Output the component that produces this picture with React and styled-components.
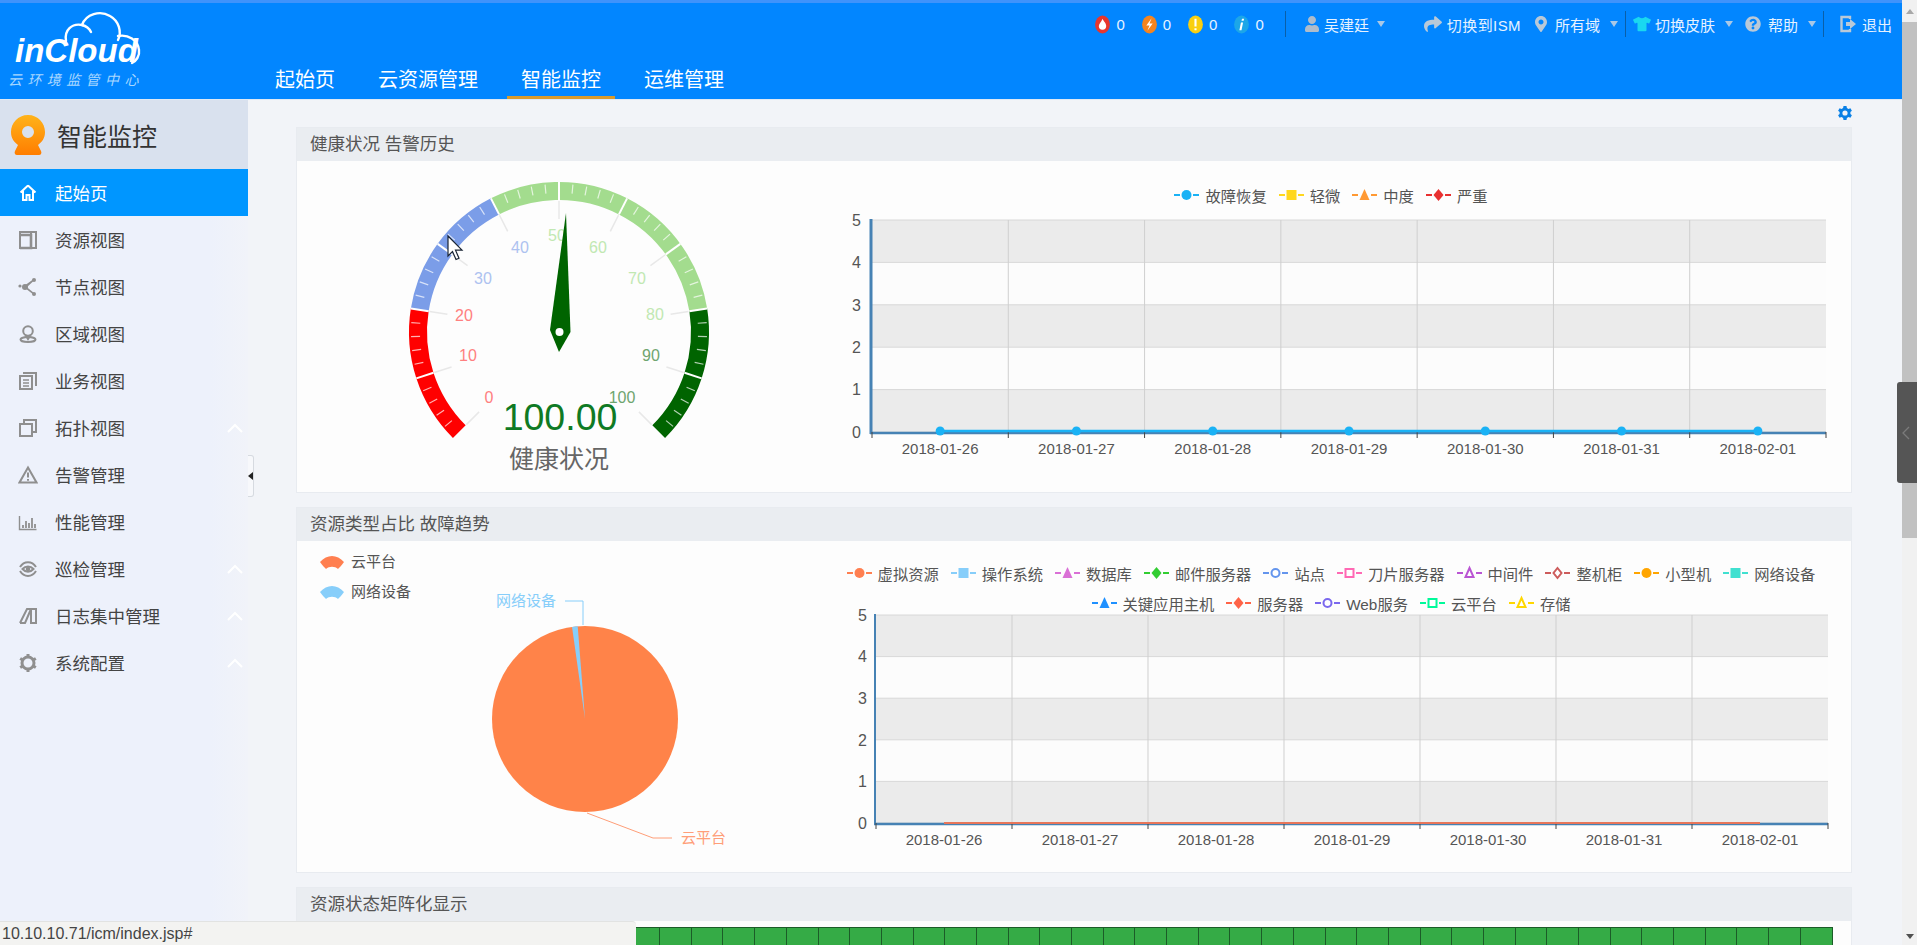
import React from "react";
import styled, { createGlobalStyle } from "styled-components";
import { FaUser, FaShare, FaMapMarkerAlt, FaTshirt, FaQuestionCircle } from "react-icons/fa";

const fontStack = `"Liberation Sans", "Noto Sans CJK SC", sans-serif`;
const blue = "#0286ff";

const GlobalStyle = createGlobalStyle`
	html, body{
		margin:0;
		height:100%;
		overflow:hidden;
		background:#f2f4f8;
		font-family:${fontStack};
	}
	*{ box-sizing:border-box; }
`;

const Page = styled.div`
	display:flex;
	height:945px;
	overflow:hidden;
	position:relative;
`;

const Shell = styled.div`
	flex:1;
	min-width:0;
	display:flex;
	flex-direction:column;
`;

const Header = styled.header`
	height:100px;
	flex:none;
	display:grid;
	grid-template-columns:261px 1fr;
	background:${blue};
	border-top:3px solid #3f93fb;
	border-bottom:1px solid #dfe9f5;
`;

const Logo = styled.div`
	position:relative;
	color:#fff;
	padding:30px 0 0 15px;
	svg{
		position:absolute;
		left:60px;
		top:5px;
	}
`;

const LogoName = styled.div`
	font-size:33px;
	line-height:36px;
	font-weight:bold;
	font-style:italic;
	letter-spacing:0;
`;

const LogoSub = styled.div`
	margin:2px 0 0 -7px;
	font-size:14px;
	line-height:18px;
	font-style:italic;
	letter-spacing:5.4px;
	color:#a9d8ff;
	white-space:nowrap;
`;

const HeaderRight = styled.div`
	display:flex;
	flex-direction:column;
	justify-content:space-between;
`;

const Toolbar = styled.div`
	height:42px;
	display:flex;
	align-items:center;
	justify-content:flex-end;
	padding-right:10px;
	font-size:15px;
	color:#e6f2ff;
`;

const Tool = styled.div`
	display:flex;
	align-items:center;
	gap:${p => p.$gap || 5}px;
	margin-left:${p => p.$ml || 0}px;
	letter-spacing:${p => p.$spacing || 0}px;
	white-space:nowrap;
	svg{ flex:none; display:block; }
`;

const Caret = styled.i`
	width:0;
	height:0;
	margin-left:${p => p.$ml || 10}px;
	border-left:4.5px solid transparent;
	border-right:4.5px solid transparent;
	border-top:6px solid #a9c8e6;
`;

const ToolDivider = styled.span`
	width:1px;
	height:26px;
	background:#0a5fa8;
	margin-left:${p => p.$ml}px;
`;

const Nav = styled.nav`
	display:flex;
	align-items:flex-end;
	gap:15px;
`;

const NavItem = styled.a`
	height:38px;
	padding:0 14px;
	font-size:20px;
	line-height:38px;
	color:#fff;
	border-bottom:3px solid ${p => (p.$active ? "#d99a2b" : "transparent")};
`;

const Body = styled.div`
	flex:1;
	min-height:0;
	display:flex;
`;

const Sidebar = styled.aside`
	width:248px;
	flex:none;
	position:relative;
	background:linear-gradient(90deg,#edf1fb 85%,#f1f3f9);
`;

const SideHead = styled.div`
	height:69px;
	display:flex;
	align-items:center;
	gap:11px;
	padding:0 0 0 10px;
	background:#d9e1ee;
	font-size:25px;
	color:#333;
`;

const SideItem = styled.a`
	height:47px;
	display:flex;
	align-items:center;
	padding:0 4px 0 18px;
	font-size:17.5px;
	color:${p => (p.$active ? "#fff" : "#444")};
	background:${p => (p.$active ? "#0096ff" : "transparent")};
	svg.icon{
		width:20px;
		height:20px;
		margin-right:17px;
		flex:none;
	}
	svg.more{
		margin-left:auto;
	}
`;

const Collapser = styled.div`
	position:absolute;
	left:100%;
	top:355px;
	width:6px;
	height:42px;
	background:#f7f8fb;
	border:1px solid #d6dae0;
	border-left:none;
	border-radius:0 3px 3px 0;
	display:flex;
	align-items:center;
	&::before{
		content:"";
		border-top:4px solid transparent;
		border-bottom:4px solid transparent;
		border-right:5px solid #222;
	}
`;

const Content = styled.main`
	flex:1;
	min-width:0;
	padding:0 50px 0 48px;
	overflow:hidden;
`;

const GearRow = styled.div`
	height:27px;
	display:flex;
	justify-content:flex-end;
	padding:5px 0 0;
	margin-right:-1px;
`;

const Panel = styled.section`
	border:1px solid #e8ebf0;
	margin-bottom:14px;
	background:#fdfdfd;
`;

const PanelTitle = styled.h3`
	margin:0;
	height:33px;
	padding-left:13px;
	font-size:17.5px;
	line-height:32px;
	font-weight:normal;
	color:#555;
	background:#eaedf1;
`;

const PanelRow = styled.div`
	display:flex;
	height:${p => p.$height}px;
	svg{ display:block; overflow:visible; }
`;

const LeftBox = styled.div`
	width:540px;
	flex:none;
`;

const ChartBox = styled.div`
	flex:1;
	min-width:0;
	padding-top:${p => p.$top}px;
`;

const LegendRow = styled.div`
	display:flex;
	justify-content:center;
	gap:12px;
	height:20px;
	margin-bottom:${p => p.$after || 0}px;
	padding-right:26px;
`;

const LegendItem = styled.div`
	display:flex;
	align-items:center;
	gap:6px;
	font-size:15.3px;
	color:#555;
	white-space:nowrap;
	svg{ flex:none; }
`;

const CellGrid = styled.div`
	display:flex;
	height:40px;
	padding:6px 0 0 14.5px;
	overflow:hidden;
`;

const Cell = styled.div`
	width:31.7px;
	height:34px;
	flex:none;
	background:#35ab46;
	border:1px solid #1c5c28;
	border-width:1px 1px 0 0;
`;

const Scrollbar = styled.div`
	width:15px;
	flex:none;
	background:#f1f1f1;
	display:flex;
	flex-direction:column;
	align-items:center;
`;

const ScrollArrow = styled.i`
	height:22px;
	flex:none;
	display:flex;
	align-items:center;
	&::before{
		content:"";
		border-left:4px solid transparent;
		border-right:4px solid transparent;
		border-bottom:5px solid #a8a8a8;
	}
`;

const ScrollThumb = styled.div`
	width:100%;
	height:516px;
	flex:none;
	background:#c1c1c1;
`;

const ScrollDown = styled.i`
	margin-top:auto;
	margin-bottom:6px;
	border-left:4px solid transparent;
	border-right:4px solid transparent;
	border-top:5px solid #505050;
`;

const DockTab = styled.div`
	position:absolute;
	right:0;
	top:382px;
	width:20px;
	height:101px;
	background:#555;
	border-radius:3px 0 0 3px;
	display:flex;
	align-items:center;
	padding-left:5px;
	color:#7b7b7b;
`;

const StatusBar = styled.div`
	position:absolute;
	left:0;
	bottom:0;
	width:636px;
	height:24px;
	padding:0 2px;
	background:#f3f3f1;
	border-top:1px solid #e2e3e2;
	border-radius:0 4px 0 0;
	font-size:16px;
	line-height:24px;
	color:#444;
`;

/* --- small drawings --- */

const CloudMark = () => (
	<svg width="84" height="58" viewBox="0 0 84 58" fill="none" stroke="#fff" strokeWidth="2.4" strokeLinecap="round">
		<path d="M6 33C4 22 12 15 22 17C26 6 40 2 50 8C59 13 62 24 58 32"/>
		<path d="M22 17C26 18 29 20 31 24"/>
		<path d="M58 28C68 26 78 32 79 42C80 48 76 53 72 55"/>
	</svg>
);

const AlertIcon = ({color, children}) => (
	<svg width="15" height="19" viewBox="0 0 14 18">
		<ellipse cx="7" cy="9" rx="7" ry="8.5" fill={color}/>
		{children}
	</svg>
);

const LogoutIcon = () => (
	<svg width="18" height="18" viewBox="0 0 18 18" fill="none">
		<path d="M11 4V2H2.5V16H11V14" stroke="#b9c9d8" strokeWidth="2.4"/>
		<path d="M7 7h4V4l6 5-6 5v-3H7z" fill="#b9c9d8"/>
	</svg>
);

const GearIcon = () => (
	<svg width="16" height="16" viewBox="0 0 16 16">
		<path fill="#0a80e6" fillRule="evenodd" d="M6.5 1h3l.4 2 1.6.9 1.9-.7 1.5 2.6-1.5 1.3v1.800l1.500 1.300-1.500 2.600-1.900-.7-1.600.9-.4 2h-3l-.4-2-1.600-.9-1.900.7-1.500-2.600 1.500-1.300V7.100L1.100 5.800l1.500-2.600 1.900.7 1.600-.9zM8 5.400a2.600 2.600 0 1 0 0 5.200 2.600 2.600 0 0 0 0-5.200z"/>
	</svg>
);

const SideLogo = () => (
	<svg width="36" height="40" viewBox="0 0 36 40">
		<defs>
			<linearGradient id="sideLogo" x1="0" y1="0" x2="0" y2="1">
				<stop offset="0" stopColor="#ffb31a"/>
				<stop offset="1" stopColor="#ff7d00"/>
			</linearGradient>
		</defs>
		<path fillRule="evenodd" fill="url(#sideLogo)" d="M18 0C28 0 35 8 35 17c0 6-3 10-7 13l3 6c1 2 0 4-2 4H7c-2 0-3-2-2-4l3-6C4 27 1 23 1 17 1 8 8 0 18 0zm0 11a6 6 0 1 0 0 12 6 6 0 0 0 0-12z"/>
	</svg>
);

const sideIcons = {
	home:<path d="M10 2.500L2.500 9.500M10 2.500l7.500 7M5 8v9h3.500v-5h3v5H15V8" />,
	panel:<g><path d="M2 2h16v16H2z"/><path d="M13 2v16" /><path d="M2 18h11V5H2" strokeWidth="2.600"/></g>,
	nodes:<g fill="#8f8f8f" stroke="none"><circle cx="7" cy="10" r="3"/><circle cx="2" cy="9" r="1.600"/><circle cx="16" cy="3" r="2"/><circle cx="16" cy="17" r="2"/><path d="M6 9l9-6.500.800 1.200L8 11zM7 11l1-1.500 8 6.500-1 1.200z"/></g>,
	region:<g><circle cx="10" cy="7" r="4.800"/><path d="M7.500 11l2.500 4 2.500-4"/><ellipse cx="10" cy="15.500" rx="7.500" ry="2.500"/></g>,
	docs:<g><path d="M2 5h12v13H2z"/><path d="M5 2h13v13"/><path d="M5 9h6M5 12h6M5 15h6" strokeWidth="1.300"/></g>,
	copy:<g><path d="M2 6h12v12H2z"/><path d="M6 6V2h12v12h-4"/></g>,
	warn:<g><path d="M10 2.500L18.500 17.500H1.500z"/><path d="M10 7.500v5M10 14v1.800" /></g>,
	bars:<g strokeWidth="1.400"><path d="M1.500 4v13.500h17"/><path d="M5 16v-3M8 16V9M11 16v-5M14 16V6M17 16v-4" strokeWidth="1.800"/></g>,
	eye:<g><path d="M2 8C6 1.500 14 1.500 18 8"/><path d="M2 12c4 6.500 12 6.500 16 0"/><path d="M4.500 10c3-3.500 8-3.500 11 0-3 3.500-8 3.500-11 0z"/><circle cx="10" cy="10" r="1.300" fill="#8f8f8f"/></g>,
	book:<g><path d="M2 17L9 3h9v14h-5V3"/><path d="M2 17h5l6-14M7 17l6-14"/></g>,
	gear:<g strokeWidth="3"><circle cx="10" cy="10" r="6"/><path d="M10 1v2.500M10 16.500V19M2.200 5.500l2.200 1.300M15.600 13.200l2.200 1.300M2.200 14.500l2.200-1.300M15.600 6.800l2.200-1.300"/></g>,
};

const SideIcon = ({name, color = "#8f8f8f"}) => (
	<svg className="icon" viewBox="0 0 20 20" fill="none" stroke={color} strokeWidth="2">
		{sideIcons[name]}
	</svg>
);

const MoreChevron = () => (
	<svg className="more" width="18" height="10" viewBox="0 0 18 10" fill="none" stroke="#fff" strokeWidth="2">
		<path d="M2 9l7-7 7 7"/>
	</svg>
);

const symbolShape = (type, cx, cy, size, color, hollow) => {
	const common = hollow
		? {fill:"#fff", stroke:color, strokeWidth:2}
		: {fill:color};
	if(type === "circle") return <circle cx={cx} cy={cy} r={size} {...common}/>;
	if(type === "rect") return <rect x={cx-size} y={cy-size} width={size*2} height={size*2} {...common}/>;
	if(type === "triangle") return <path d={`M${cx} ${cy-size-1}L${cx+size} ${cy+size}H${cx-size}Z`} {...common}/>;
	return <path d={`M${cx} ${cy-size-1}L${cx+size} ${cy}L${cx} ${cy+size+1}L${cx-size} ${cy}Z`} {...common}/>;
};

const LegendMark = ({item}) => (
	<svg width="25" height="14" viewBox="0 0 25 14">
		<path d="M0 7h6M19 7h6" stroke={item.color} strokeWidth="2"/>
		{symbolShape(item.type, 12.5, 7, item.hollow ? 4 : 5, item.color, item.hollow)}
	</svg>
);

const Legend = ({items, after}) => (
	<LegendRow $after={after}>
		{items.map(item => (
			<LegendItem key={item.name}>
				<LegendMark item={item}/>
				{item.name}
			</LegendItem>
		))}
	</LegendRow>
);

/* --- charts --- */

const dates = ["2018-01-26","2018-01-27","2018-01-28","2018-01-29","2018-01-30","2018-01-31","2018-02-01"];

const TrendChart = ({width, height, left, right, top, bottom, labelRight, axisWidth, renderData}) => {
	const rowH = (bottom-top)/5;
	const colW = (right-left)/7;
	const rows = [0,1,2,3,4];
	return (
		<svg width={width} height={height} viewBox={`0 0 ${width} ${height}`}>
			{rows.map(i => (
				<rect key={i} x={left} y={top+i*rowH} width={right-left} height={rowH} fill={i%2 ? "#fcfcfc" : "#ebebeb"}/>
			))}
			{[0,1,2,3,4,5].map(i => (
				<path key={i} d={`M${left} ${top+i*rowH}H${right}`} stroke="#d8d8d8"/>
			))}
			{[1,2,3,4,5,6].map(i => (
				<path key={i} d={`M${left+i*colW} ${top}V${bottom}`} stroke="#cfcfcf"/>
			))}
			<path d={`M${left-1} ${top-1}V${bottom+2}`} stroke="#4682b4" strokeWidth={axisWidth}/>
			<path d={`M${left-2} ${bottom+1}H${right}`} stroke="#4682b4" strokeWidth="2.600"/>
			{[0,1,2,3,4,5,6,7].map(i => (
				<path key={i} d={`M${left+i*colW} ${bottom}v6`} stroke="#444"/>
			))}
			{renderData(colW)}
			{rows.concat(5).map(i => (
				<text key={i} x={labelRight} y={top+i*rowH} dy=".36em" textAnchor="end" fontSize="16" fill="#555">{5-i}</text>
			))}
			{dates.map((d,i) => (
				<text key={d} x={left+(i+.5)*colW} y={bottom+17} dy=".36em" textAnchor="middle" fontSize="15" fill="#555">{d}</text>
			))}
		</svg>
	);
};

const gaugePoint = (cx, cy, r, value) => {
	const a = (225-2.7*value)*Math.PI/180;
	return [cx+r*Math.cos(a), cy-r*Math.sin(a)];
};

const gaugeBands = [
	{from:0, to:20, color:"#ff0000", label:"#ff8080"},
	{from:20, to:40, color:"#7b9de8", label:"#adc2f0"},
	{from:40, to:80, color:"#a3dc8e", label:"#c1e8b2"},
	{from:80, to:100, color:"#006400", label:"#6fa56f"},
];

/* label centres read off the echarts canvas, they don't sit on a clean circle */
const gaugeLabels = [
	[0,192,236],[10,171,194],[20,167,154],[30,186,117],[40,223,86],[50,260,74],
	[60,301,86],[70,340,117],[80,358,153],[90,354,194],[100,325,236],
];

const Gauge = () => {
	const cx = 262, cy = 171;
	const line = (value, r1, r2) => {
		const [x1,y1] = gaugePoint(cx,cy,r1,value);
		const [x2,y2] = gaugePoint(cx,cy,r2,value);
		return `M${x1} ${y1}L${x2} ${y2}`;
	};
	const minors = [];
	for(let v = 0; v <= 100; v += 2){
		if(v%10) minors.push(v);
	}
	const majors = [0,10,20,30,40,50,60,70,80,90,100];
	const labelColor = v => gaugeBands.find(b => v <= b.to).label;
	return (
		<svg width="540" height="332" viewBox="0 0 540 332">
			{gaugeBands.map(b => {
				const [x1,y1] = gaugePoint(cx,cy,141,b.from);
				const [x2,y2] = gaugePoint(cx,cy,141,b.to);
				return <path key={b.from} d={`M${x1} ${y1}A141 141 0 0 1 ${x2} ${y2}`} fill="none" stroke={b.color} strokeWidth="18"/>;
			})}
			{minors.map(v => <path key={v} d={line(v,148,139)} stroke="#fff" strokeOpacity=".7" strokeWidth="1.200"/>)}
			{majors.map(v => (
				<g key={v}>
					{v%100 !== 0 && <path d={line(v,150,132)} stroke="#fff" strokeWidth="2"/>}
					<path d={line(v,131,113)} stroke="#e8e8e8" strokeWidth="1.500"/>
				</g>
			))}
			{gaugeLabels.map(([v,x,y]) => (
				<text key={v} x={x} y={y} dy=".36em" textAnchor="middle" fontSize="16" fill={labelColor(v)}>{v}</text>
			))}
			<path d="M269 52L273.500 171L262 191L253 169z" fill="#006400"/>
			<circle cx="262.500" cy="171" r="4" fill="#fff"/>
			<text x="263" y="255" dy=".36em" textAnchor="middle" fontSize="37.500" fill="#0f7a24">100.00</text>
			<text x="262" y="298" dy=".36em" textAnchor="middle" fontSize="25" fill="#666">健康状况</text>
			<path d="M151 75v20l4.500-4.500 3.500 8 3-1.300-3.500-8h6.500z" fill="#fff" stroke="#1a2433" strokeWidth="1.200"/>
		</svg>
	);
};

const PieFan = ({y, color}) => (
	<path d={`M23 ${y}C30 ${y-8} 40 ${y-8} 47 ${y}C44 ${y+4} 42 ${y+6} 41 ${y+7}C38 ${y+4} 32 ${y+4} 29 ${y+7}C28 ${y+6} 26 ${y+4} 23 ${y}Z`} fill={color}/>
);

const pieColor = "#ff8349";
const sliceColor = "#87cefa";

const PieChart = () => {
	const cx = 288, cy = 178, r = 93;
	const at = deg => {
		const a = deg*Math.PI/180;
		return [cx+r*Math.sin(a), cy-r*Math.cos(a)];
	};
	const [sx1,sy1] = at(-8);
	const [sx2,sy2] = at(-4.5);
	return (
		<svg width="540" height="331" viewBox="0 0 540 331">
			<PieFan y={21} color="#ff7f50"/>
			<text x="54" y="21" dy=".36em" fontSize="15" fill="#555">云平台</text>
			<PieFan y={51} color={sliceColor}/>
			<text x="54" y="51" dy=".36em" fontSize="15" fill="#555">网络设备</text>
			<circle cx={cx} cy={cy} r={r} fill={pieColor}/>
			<path d={`M${cx} ${cy}L${sx1} ${sy1}A${r} ${r} 0 0 1 ${sx2} ${sy2}Z`} fill={sliceColor}/>
			<path d="M268 60H286V84" fill="none" stroke={sliceColor}/>
			<text x="199" y="60" dy=".36em" fontSize="15" fill={sliceColor}>网络设备</text>
			<path d="M290 272L356 297H375" fill="none" stroke="#ff9e78"/>
			<text x="384" y="297" dy=".36em" fontSize="15" fill="#ff9e78">云平台</text>
		</svg>
	);
};

/* --- data --- */

const healthLegend = [
	{name:"故障恢复", color:"#1ab2f5", type:"circle"},
	{name:"轻微", color:"#ffd71e", type:"rect"},
	{name:"中度", color:"#ff9933", type:"triangle"},
	{name:"严重", color:"#e83030", type:"diamond"},
];

const trendLegendTop = [
	{name:"虚拟资源", color:"#ff7f50", type:"circle"},
	{name:"操作系统", color:"#87cefa", type:"rect"},
	{name:"数据库", color:"#da70d6", type:"triangle"},
	{name:"邮件服务器", color:"#32cd32", type:"diamond"},
	{name:"站点", color:"#6495ed", type:"circle", hollow:true},
	{name:"刀片服务器", color:"#ff69b4", type:"rect", hollow:true},
	{name:"中间件", color:"#ba55d3", type:"triangle", hollow:true},
	{name:"整机柜", color:"#cd5c5c", type:"diamond", hollow:true},
	{name:"小型机", color:"#ffa500", type:"circle"},
	{name:"网络设备", color:"#40e0d0", type:"rect"},
];

const trendLegendBottom = [
	{name:"关键应用主机", color:"#1e90ff", type:"triangle"},
	{name:"服务器", color:"#ff6347", type:"diamond"},
	{name:"Web服务", color:"#7b68ee", type:"circle", hollow:true},
	{name:"云平台", color:"#00fa9a", type:"rect", hollow:true},
	{name:"存储", color:"#ffd700", type:"triangle", hollow:true},
];

const menu = [
	{name:"资源视图", icon:"panel"},
	{name:"节点视图", icon:"nodes"},
	{name:"区域视图", icon:"region"},
	{name:"业务视图", icon:"docs"},
	{name:"拓扑视图", icon:"copy", more:true},
	{name:"告警管理", icon:"warn"},
	{name:"性能管理", icon:"bars"},
	{name:"巡检管理", icon:"eye", more:true},
	{name:"日志集中管理", icon:"book", more:true},
	{name:"系统配置", icon:"gear", more:true},
];

const cells = Array.from({length:48}, (_,i) => i);

const App = () => {
	return (
	<Page>
		<GlobalStyle/>
		<Shell>
			<Header>
				<Logo>
					<CloudMark/>
					<LogoName>inCloud</LogoName>
					<LogoSub>云环境监管中心</LogoSub>
				</Logo>
				<HeaderRight>
					<Toolbar>
						<Tool $gap={6}>
							<AlertIcon color="#e8362d"><path d="M7 3.500c1 2.500 3.500 4 3.500 7a3.500 3.500 0 0 1-7 0C3.500 8.500 6 6.500 7 3.500z" fill="#fff"/></AlertIcon>0
						</Tool>
						<Tool $gap={6} $ml={17}>
							<AlertIcon color="#f5841f"><path d="M9 3L4 10h3l-2 5 5-7H7z" fill="#fff"/></AlertIcon>0
						</Tool>
						<Tool $gap={6} $ml={17}>
							<AlertIcon color="#f9cf10"><path d="M6 3.500h2v7.500H6zM6 12.500h2v2H6z" fill="#fff"/></AlertIcon>0
						</Tool>
						<Tool $gap={6} $ml={17}>
							<AlertIcon color="#1ca6e8"><path d="M7.500 3.500h2l-.5 2h-2zM6.500 7h2l-1.500 7.500H5z" fill="#fff"/></AlertIcon>0
						</Tool>
						<ToolDivider $ml={21.5}/>
						<Tool $gap={4.4} $ml={17.4}>
							<FaUser size={16} color="#aebccb"/>吴建廷
							<Caret $ml={4}/>
						</Tool>
						<Tool $ml={38.4} $spacing={0.4}>
							<FaShare size={18} color="#b9c9d8"/>切换到ISM
						</Tool>
						<Tool $gap={8} $ml={14}>
							<FaMapMarkerAlt size={16} color="#b9c9d8" style={{width:12}}/>所有域
							<Caret $ml={2}/>
						</Tool>
						<ToolDivider $ml={7}/>
						<Tool $gap={4} $ml={7}>
							<FaTshirt size={18} color="#19d8f0"/>切换皮肤
							<Caret $ml={6}/>
						</Tool>
						<Tool $gap={7} $ml={12}>
							<FaQuestionCircle size={16} color="#b9c9d8"/>帮助
							<Caret $ml={3}/>
						</Tool>
						<ToolDivider $ml={7}/>
						<Tool $ml={15}>
							<LogoutIcon/>退出
						</Tool>
					</Toolbar>
					<Nav>
						<NavItem>起始页</NavItem>
						<NavItem>云资源管理</NavItem>
						<NavItem $active>智能监控</NavItem>
						<NavItem>运维管理</NavItem>
					</Nav>
				</HeaderRight>
			</Header>
			<Body>
				<Sidebar>
					<SideHead>
						<SideLogo/>
						智能监控
					</SideHead>
					<SideItem $active>
						<SideIcon name="home" color="#fff"/>
						起始页
					</SideItem>
					{menu.map(m => (
						<SideItem key={m.name}>
							<SideIcon name={m.icon}/>
							{m.name}
							{m.more && <MoreChevron/>}
						</SideItem>
					))}
					<Collapser/>
				</Sidebar>
				<Content>
					<GearRow><GearIcon/></GearRow>
					<Panel>
						<PanelTitle>健康状况 告警历史</PanelTitle>
						<PanelRow $height={331}>
							<LeftBox><Gauge/></LeftBox>
							<ChartBox $top={24}>
								<Legend items={healthLegend} after={2}/>
								<TrendChart
									width={1014} height={285}
									left={35} right={989} top={13} bottom={225}
									labelRight={24} axisWidth={3}
									renderData={colW => (
										<g>
											<path d={`M${35+colW/2} 224H${35+colW*6.5}`} stroke="#1ab2f5" strokeWidth="2.400"/>
											{dates.map((d,i) => (
												<circle key={d} cx={35+colW*(i+.5)} cy="224" r="4.500" fill="#1ab2f5"/>
											))}
										</g>
									)}
								/>
							</ChartBox>
						</PanelRow>
					</Panel>
					<Panel>
						<PanelTitle>资源类型占比 故障趋势</PanelTitle>
						<PanelRow $height={331}>
							<LeftBox><PieChart/></LeftBox>
							<ChartBox $top={22}>
								<Legend items={trendLegendTop} after={10}/>
								<Legend items={trendLegendBottom} after={1}/>
								<TrendChart
									width={1014} height={258}
									left={39} right={991} top={1} bottom={209}
									labelRight={30} axisWidth={2}
									renderData={colW => (
										<path d={`M${39+colW/2} 209H${39+colW*6.5}`} stroke="#e8765a" strokeWidth="2"/>
									)}
								/>
							</ChartBox>
						</PanelRow>
					</Panel>
					<Panel>
						<PanelTitle>资源状态矩阵化显示</PanelTitle>
						<CellGrid>
							{cells.map(i => <Cell key={i}/>)}
						</CellGrid>
					</Panel>
				</Content>
			</Body>
		</Shell>
		<Scrollbar>
			<ScrollArrow/>
			<ScrollThumb/>
			<ScrollDown/>
		</Scrollbar>
		<DockTab>
			<svg width="8" height="14" viewBox="0 0 8 14" fill="none" stroke="currentColor" strokeWidth="1.300"><path d="M7 1L1 7l6 6"/></svg>
		</DockTab>
		<StatusBar>10.10.10.71/icm/index.jsp#</StatusBar>
	</Page>
	);
};

export default App;
